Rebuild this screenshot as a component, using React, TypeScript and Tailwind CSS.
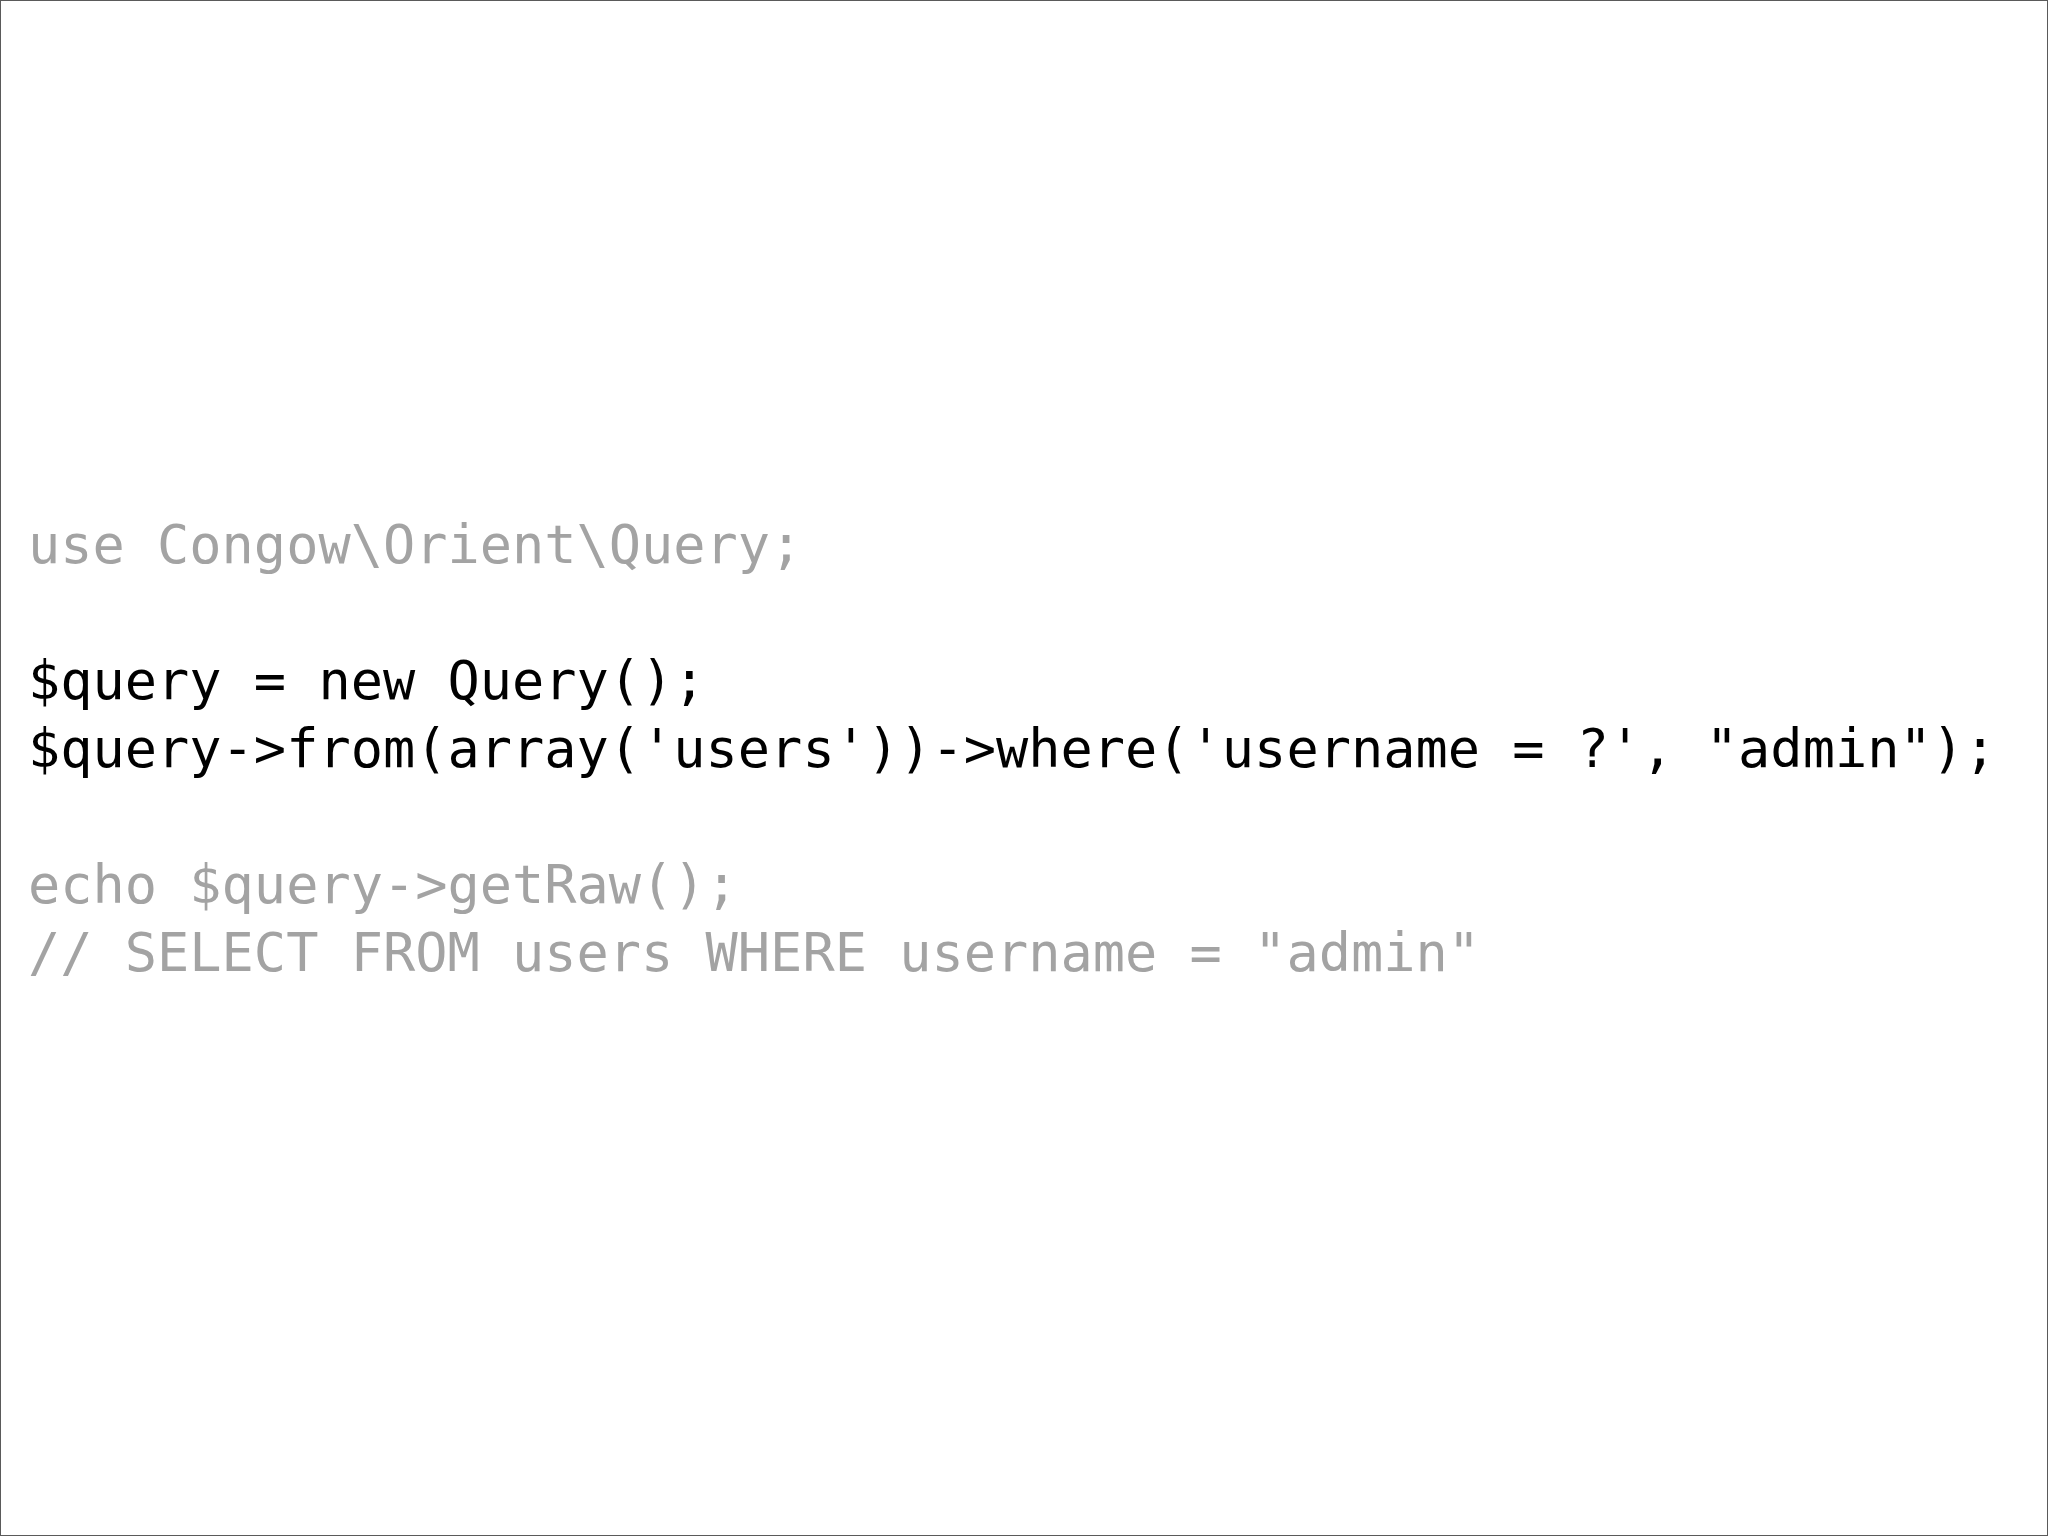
import React from "react";

const gray = "text-[#a3a3a3]";

export default function App() {
  return (
    <div className="w-[2048px] h-[1536px] bg-white border border-[#5a5a5a] box-border overflow-hidden">
      <div
        className="pt-[510px] pl-[27px] text-[53.6px] leading-[68px] whitespace-pre"
        style={{ fontFamily: '"DejaVu Sans Mono", "Liberation Mono", monospace' }}
      >
        <div className={gray}>{"use Congow\\Orient\\Query;"}</div>
        <div>&nbsp;</div>
        <div className="text-black">{"$query = new Query();"}</div>
        <div className="text-black">{"$query->from(array('users'))->where('username = ?', \"admin\");"}</div>
        <div>&nbsp;</div>
        <div className={gray}>{"echo $query->getRaw();"}</div>
        <div className={gray}>{"// SELECT FROM users WHERE username = \"admin\""}</div>
      </div>
    </div>
  );
}
